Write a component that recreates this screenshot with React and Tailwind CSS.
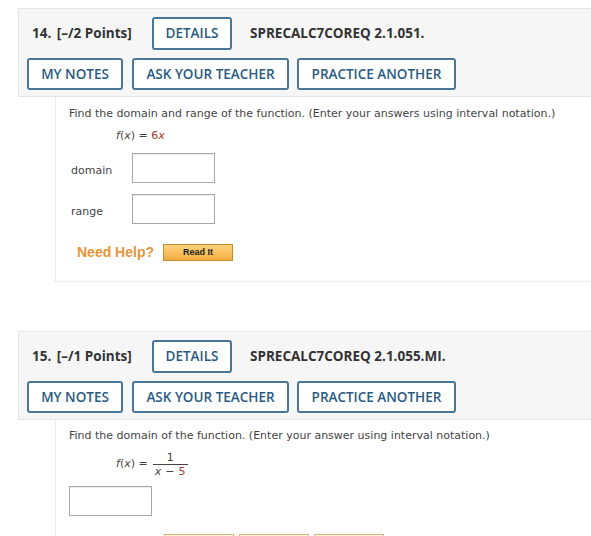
import React from "react";

const btn =
  "h-full flex items-center justify-center rounded-[3px] border-2 border-[#4b7698] bg-white text-[#2a5a82] font-semibold text-[13.5px]";

function Header({ num, pts, code }) {
  return (
    <div className="ml-[18px] w-[600px] h-[89px] bg-[#f6f6f6] border-t border-l border-b border-[#e6e6e6] flex flex-col pl-[8px] pt-[8px]" style={{ fontFamily: '"Open Sans", sans-serif' }}>
      <div className="flex items-center h-[33px]">
        <div className="ml-[5px] w-[120px] font-bold text-[13.5px] text-[#333]">
          {num}. <span className="ml-[2px]">[–/{pts} Points]</span>
        </div>
        <div className={btn + " w-[80px]"}>DETAILS</div>
        <div className="ml-[18px] font-bold text-[13.5px] text-[#333]">{code}</div>
      </div>
      <div className="flex h-[32px] mt-[8px]">
        <div className={btn + " w-[96px]"}>MY NOTES</div>
        <div className={btn + " w-[157px] ml-[9px]"}>ASK YOUR TEACHER</div>
        <div className={btn + " w-[159px] ml-[8px]"}>PRACTICE ANOTHER</div>
      </div>
    </div>
  );
}

const body = { fontFamily: '"DejaVu Sans", Verdana, sans-serif' };

function Box({ w = 84, h = 30, className = "" }) {
  return <div className={"border border-[#a8a8a8] bg-white shadow-[inset_0_1px_1px_rgba(0,0,0,0.08)] " + className} style={{ width: w, height: h }} />;
}

export default function App() {
  return (
    <div className="w-[591px] h-[536px] overflow-hidden bg-white">
      <div className="pt-[8px]">
        <Header num="14" pts="2" code="SPRECALC7COREQ 2.1.051." />
        <div className="ml-[55px] w-[600px] h-[185px] border-l border-b border-[#ececec] pl-[13px] pt-[9px] text-[11px] text-[#444]" style={body}>
          <div className="leading-[16px]">Find the domain and range of the function. (Enter your answers using interval notation.)</div>
          <div className="ml-[47px] mt-[6px] leading-[16px]">
            <i>f</i>(<i>x</i>) = <span className="text-[#a63a2c]">6<i>x</i></span>
          </div>
          <div className="flex items-center mt-[9px] h-[30px]">
            <div className="w-[63px] pl-[2px] pt-[6px]">domain</div>
            <Box w={83} />
          </div>
          <div className="flex items-center mt-[11px] h-[30px]">
            <div className="w-[63px] pl-[2px] pt-[6px]">range</div>
            <Box w={83} />
          </div>
          <div className="flex items-center mt-[18px] ml-[8px]">
            <span className="text-[14px] font-bold text-[#e4963a]" style={{ fontFamily: '"Liberation Sans", Arial, sans-serif' }}>Need Help?</span>
            <div className="ml-[9px] w-[70px] h-[17px] border border-[#c58a2c] bg-gradient-to-b from-[#fcd27a] to-[#f2ad3e] flex items-center justify-center text-[9px] font-bold text-[#222]" style={{ fontFamily: '"Liberation Sans", Arial, sans-serif' }}>Read It</div>
          </div>
        </div>
      </div>
      <div className="pt-[49px]">
        <Header num="15" pts="1" code="SPRECALC7COREQ 2.1.055.MI." />
        <div className="ml-[55px] w-[600px] h-[200px] border-l border-[#ececec] pl-[13px] pt-[8px] text-[11px] text-[#444]" style={body}>
          <div className="leading-[16px]">Find the domain of the function. (Enter your answer using interval notation.)</div>
          <div className="ml-[47px] mt-[7px] flex items-center">
            <span><i>f</i>(<i>x</i>) =</span>
            <span className="flex flex-col items-center ml-[5px] w-[35px] text-[11px] leading-[13px]">
              <span>1</span>
              <span className="w-full border-t border-[#444] flex justify-center gap-[4px]"><i>x</i><span>−</span><span className="text-[#a63a2c]">5</span></span>
            </span>
          </div>
          <Box w={83} h={30} className="mt-[8px]" />
          <div className="flex gap-[5px] ml-[95px] mt-[18px]">
            <div className="w-[70px] h-[20px] border border-[#d9b77a] bg-[#fdf5e2]" />
            <div className="w-[70px] h-[20px] border border-[#d9b77a] bg-[#fdf5e2]" />
            <div className="w-[70px] h-[20px] border border-[#d9b77a] bg-[#fdf5e2]" />
          </div>
        </div>
      </div>
    </div>
  );
}
